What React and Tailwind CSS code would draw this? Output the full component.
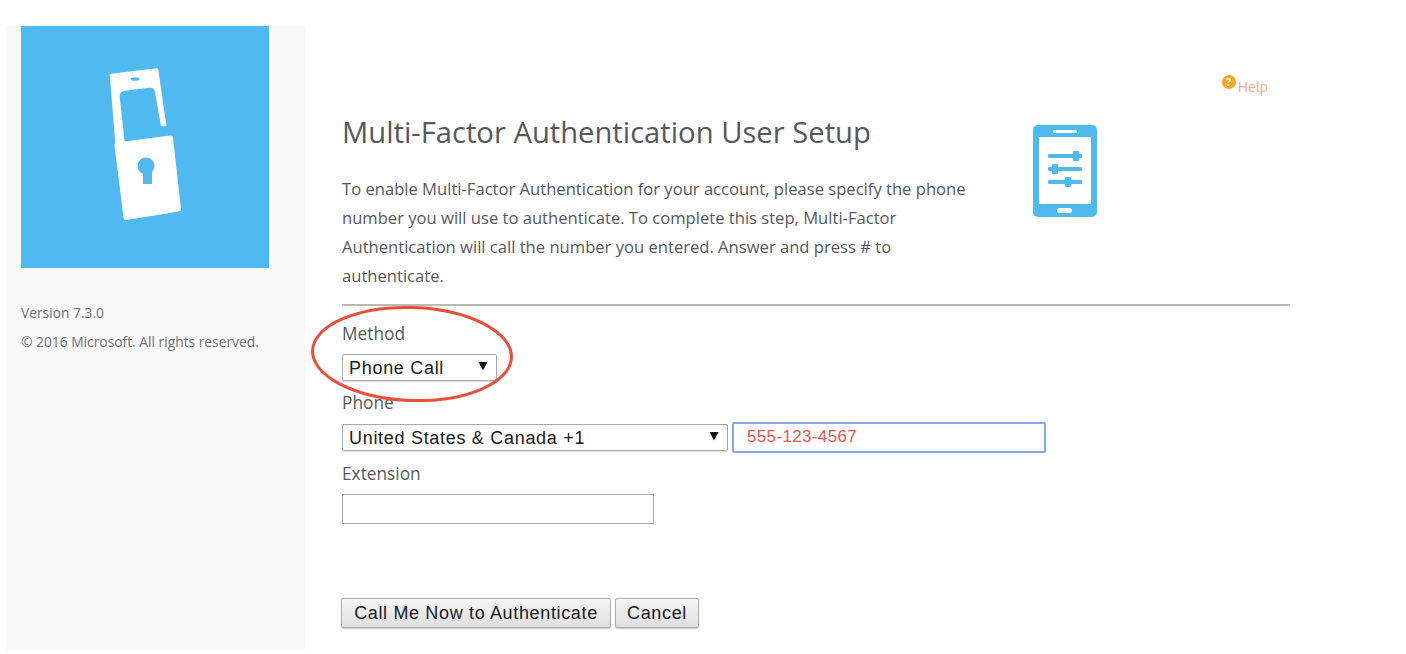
import React from 'react';

const LockLogo = () => (
  <svg viewBox="21 26 248 242" className="block w-[248px] h-[242px]">
    <rect x="21" y="26" width="248" height="242" fill="#4fb9f0" />
    <path
      d="M111 75 L157 69.5 L165 125 L162 125 L156.5 93 Q155.5 85.5 149 86.5 L125 89.5 Q118 90.5 118.5 97 L123.5 143 L116.5 143 Z"
      fill="#fff"
      stroke="#fff"
      strokeWidth="2.5"
      strokeLinejoin="round"
    />
    <ellipse cx="135" cy="79" rx="4.5" ry="1.8" fill="#4fb9f0" />
    <path
      d="M117 145 L170.5 138 L178.5 209 L126 217.5 Z"
      fill="#fff"
      stroke="#fff"
      strokeWidth="5"
      strokeLinejoin="round"
    />
    <circle cx="146" cy="166" r="8.5" fill="#4fb9f0" />
    <rect x="143" y="168" width="9" height="16" fill="#4fb9f0" />
  </svg>
);

const PhoneIcon = () => (
  <svg viewBox="1033 125 64 92" className="block w-[64px] h-[92px]">
    <rect x="1033" y="125" width="64" height="92" rx="5" fill="#4fb9f0" />
    <rect x="1039" y="137" width="52" height="67" fill="#fff" />
    <rect x="1053" y="130" width="24" height="3" rx="1.5" fill="#fff" />
    <rect x="1057" y="208" width="15" height="5" rx="2.5" fill="#fff" />
    <g fill="#4fb9f0">
      <rect x="1048" y="154" width="34" height="4" rx="1" />
      <rect x="1073" y="151" width="6" height="10" rx="1" />
      <rect x="1048" y="167" width="34" height="4" rx="1" />
      <rect x="1052" y="164" width="6" height="10" rx="1" />
      <rect x="1048" y="180" width="34" height="4" rx="1" />
      <rect x="1065" y="177" width="6" height="10" rx="1" />
    </g>
  </svg>
);

const SelectBox = ({ width, options }) => (
  <div className={`relative ${width}`}>
    <select className="block w-full h-[27px] appearance-none bg-white border border-[#a9a9a9] rounded-[2px] pl-[6px] pr-5 font-['Liberation_Sans',sans-serif] text-[18px] tracking-[0.7px] text-[#1a1a1a] shadow-[0_1px_1px_#ddd]">
      {options.map((o) => (
        <option key={o}>{o}</option>
      ))}
    </select>
    <svg viewBox="0 0 10 10" className="absolute right-[9px] top-[7px] w-[10px] h-[10px] pointer-events-none">
      <path d="M0.5 1 L9.5 1 L5 9.5 Z" fill="#111" />
    </svg>
  </div>
);

const Label = ({ children, className = '' }) => (
  <label className={`block text-[17.3px] leading-[22px] text-[#55595c] ${className}`}>{children}</label>
);

const ActionButton = ({ children, className = '' }) => (
  <button className={`h-[30px] border border-[#adadad] rounded-[2px] bg-gradient-to-b from-[#f6f6f6] to-[#dedede] font-['Liberation_Sans',sans-serif] text-[18px] tracking-[0.65px] text-[#1a1a1a] shadow-[0_1px_1px_#ccc] ${className}`}>
    {children}
  </button>
);

export default function App() {
  return (
    <div className="relative w-[1406px] h-[654px] overflow-hidden bg-white font-['Open_Sans',sans-serif] flex pt-[26px] pl-[6px]">
      {/* Sidebar */}
      <aside className="w-[299px] h-[624px] bg-[#f9f9f9] pl-[15px] shrink-0">
        <LockLogo />
        <p className="mt-[35px] text-[13.8px] leading-[20px] text-[#6b7075]">Version 7.3.0</p>
        <p className="mt-[9px] text-[13.8px] leading-[20px] text-[#6b7075] whitespace-nowrap">© 2016 Microsoft. All rights reserved.</p>
      </aside>

      {/* Main */}
      <main className="relative ml-[37px] w-[948px]">
        <div className="flex justify-end items-start pt-[49px] pr-[22px] h-[72px]">
          <span className="flex w-[14px] h-[14px] mt-0 rounded-full bg-[#f5a623] text-white text-[10px] leading-[14px] font-bold items-center justify-center">?</span>
          <span className="ml-[2px] mt-[2px] text-[14px] leading-[20px] text-[#f5a98a]">Help</span>
        </div>

        <div className="flex items-start h-[206px]">
          <div className="w-[691px]">
            <h1 className="mt-[12px] text-[29.2px] leading-[44px] text-[#55595c] whitespace-nowrap">
              Multi-Factor Authentication User Setup
            </h1>
            <p className="mt-[20px] w-[640px] text-[16.6px] leading-[29px] text-[#55595c]">
              To enable Multi-Factor Authentication for your account, please specify the phone number you will use to
              authenticate. To complete this step, Multi-Factor Authentication will call the number you entered. Answer
              and press # to authenticate.
            </p>
          </div>
          <div className="mt-[27px]">
            <PhoneIcon />
          </div>
        </div>

        <hr className="border-0 h-[2px] bg-[#bcbcae]" />

        <Label className="mt-[17px]">Method</Label>
        <div className="mt-[9px]">
          <SelectBox width="w-[155px]" options={['Phone Call']} />
        </div>

        <Label className="mt-[11px]">Phone</Label>
        <div className="mt-[8px] flex items-center gap-[4px]">
          <SelectBox width="w-[386px]" options={['United States & Canada +1']} />
          <input
            defaultValue="555-123-4567"
            className="w-[314px] h-[31px] border-2 border-[#86a8e7] rounded-[2px] pl-[13px] pb-[1px] font-['Liberation_Sans',sans-serif] text-[17px] tracking-[0.35px] text-[#ef5350] outline-none"
          />
        </div>

        <Label className="mt-[10px]">Extension</Label>
        <input className="block mt-[9px] w-[312px] h-[30px] border border-[#a9a9a9] bg-white outline-none" />

        <div className="mt-[74px] -ml-[1px] flex gap-[4px]">
          <ActionButton className="w-[270px]">Call Me Now to Authenticate</ActionButton>
          <ActionButton className="w-[84px]">Cancel</ActionButton>
        </div>
      </main>

      {/* Annotation circled over the Method field */}
      <svg viewBox="0 0 204 100" className="absolute left-[310px] top-[304px] w-[204px] h-[100px] pointer-events-none">
        <ellipse cx="102" cy="50" rx="99.5" ry="46.5" fill="none" stroke="#ea4f3d" strokeWidth="3" transform="rotate(2 102 50)" />
      </svg>
    </div>
  );
}
